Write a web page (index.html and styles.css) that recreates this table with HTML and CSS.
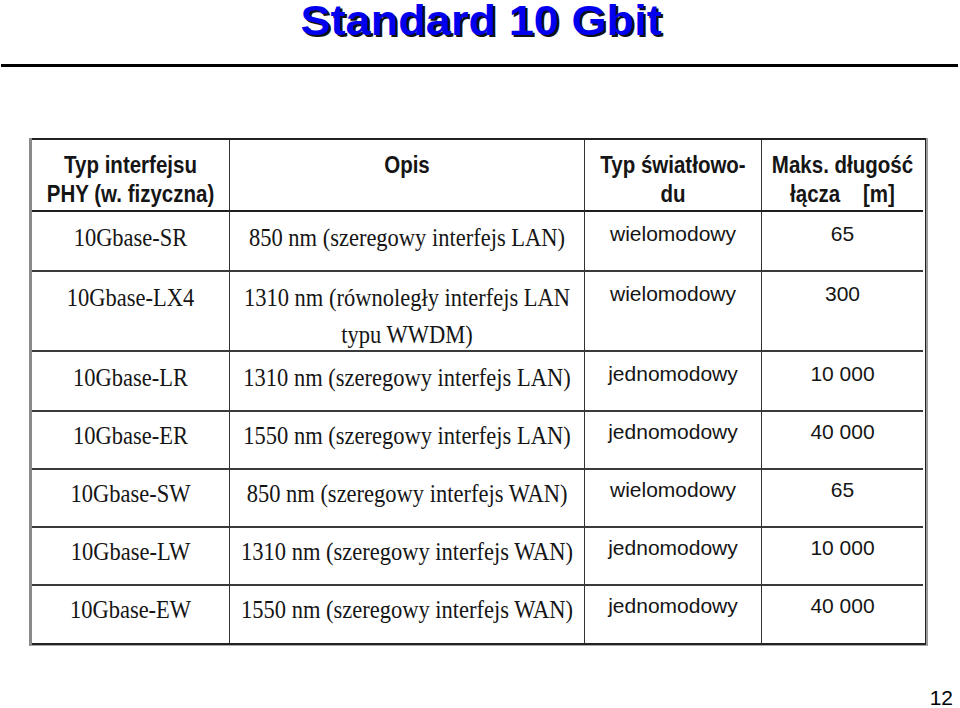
FILE: index.html
```html
<!DOCTYPE html>
<html lang="pl">
<head>
<meta charset="utf-8">
<title>Standard 10 Gbit</title>
<link rel="stylesheet" href="styles.css">
</head>
<body>
<div class="slide">
  <h1 class="title"><span class="title-text">Standard 10 Gbit</span></h1>
  <div class="rule"></div>
  <div class="table-frame">
    <div class="grid">
      <div class="cell head"><span class="tall">Typ interfejsu<br>PHY (w. fizyczna)</span></div>
      <div class="cell head"><span class="tall">Opis</span></div>
      <div class="cell head"><span class="tall">Typ światłowo-<br>du</span></div>
      <div class="cell head last-col"><span class="tall">Maks. długość<br>łącza&nbsp;&nbsp;&nbsp;&nbsp;[m]</span></div>

      <div class="cell serif"><span class="tall">10Gbase-SR</span></div>
      <div class="cell serif"><span class="tall">850 nm (szeregowy interfejs LAN)</span></div>
      <div class="cell sans">wielomodowy</div>
      <div class="cell sans last-col">65</div>

      <div class="cell serif"><span class="tall">10Gbase-LX4</span></div>
      <div class="cell serif"><span class="tall">1310 nm (równoległy interfejs LAN<br>typu WWDM)</span></div>
      <div class="cell sans">wielomodowy</div>
      <div class="cell sans last-col">300</div>

      <div class="cell serif"><span class="tall">10Gbase-LR</span></div>
      <div class="cell serif"><span class="tall">1310 nm (szeregowy interfejs LAN)</span></div>
      <div class="cell sans">jednomodowy</div>
      <div class="cell sans last-col">10 000</div>

      <div class="cell serif tight"><span class="tall">10Gbase-ER</span></div>
      <div class="cell serif tight"><span class="tall">1550 nm (szeregowy interfejs LAN)</span></div>
      <div class="cell sans tight">jednomodowy</div>
      <div class="cell sans tight last-col">40 000</div>

      <div class="cell serif tight"><span class="tall">10Gbase-SW</span></div>
      <div class="cell serif tight"><span class="tall">850 nm (szeregowy interfejs WAN)</span></div>
      <div class="cell sans tight">wielomodowy</div>
      <div class="cell sans tight last-col">65</div>

      <div class="cell serif tight"><span class="tall">10Gbase-LW</span></div>
      <div class="cell serif tight"><span class="tall">1310 nm (szeregowy interfejs WAN)</span></div>
      <div class="cell sans tight">jednomodowy</div>
      <div class="cell sans tight last-col">10 000</div>

      <div class="cell serif tight last-row"><span class="tall">10Gbase-EW</span></div>
      <div class="cell serif tight last-row"><span class="tall">1550 nm (szeregowy interfejs WAN)</span></div>
      <div class="cell sans tight last-row">jednomodowy</div>
      <div class="cell sans tight last-row last-col">40 000</div>
    </div>
  </div>
  <div class="page-number">12</div>
</div>
</body>
</html>
```

FILE: styles.css
```css
html, body {
  margin: 0;
  padding: 0;
  background: #ffffff;
}

.slide {
  width: 960px;
  height: 708px;
  display: flex;
  flex-direction: column;
  overflow: hidden;
  font-family: "Liberation Sans", Arial, sans-serif;
}

.title {
  margin: 0;
  height: 40px;
  font-size: 43px;
  line-height: 40px;
  font-weight: bold;
  text-align: center;
  color: #0000ee;
}

.title-text {
  display: inline-block;
  transform: scaleX(1.05);
  text-shadow: 2px 2px 0 #111;
  padding-left: 2px;
}

.rule {
  margin: 24px 0 0 1px;
  width: 957px;
  height: 3px;
  background: #000000;
}

.table-frame {
  margin: 71px 0 0 29px;
  width: 894px;
  border-left: 3px solid #8a8a8a;
  border-right: 2px solid #9c9c9c;
  border-bottom: 1px solid #a8a8a8;
}

.grid {
  display: grid;
  grid-template-columns: 198px 355px 177px 161px;
  grid-template-rows: 72px 60px 80px 60px 58px 58px 58px 57px;
  border-top: 2px solid #222;
  border-right: 1px solid #222;
  border-bottom: 2px solid #222;
  color: #151515;
}

.cell {
  box-sizing: border-box;
  border-right: 1px solid #333;
  border-bottom: 2px solid #3a3a3a;
  text-align: center;
}

.last-col {
  border-right: none;
}

.last-row {
  border-bottom: none;
}

.tall {
  display: block;
  transform: scaleY(1.15);
  transform-origin: top center;
}

.head {
  font-family: "Liberation Sans", Arial, sans-serif;
  font-weight: bold;
  font-size: 20.5px;
  line-height: 25px;
  padding-top: 10px;
  border-bottom-color: #1e1e1e;
}

.serif {
  font-family: "Liberation Serif", "Times New Roman", serif;
  font-size: 22.5px;
  line-height: 32px;
  padding-top: 8px;
}

.sans {
  font-family: "Liberation Sans", Arial, sans-serif;
  font-size: 21px;
  line-height: 37px;
  padding-top: 3px;
}

.serif.tight {
  padding-top: 6px;
}

.sans.tight {
  padding-top: 1px;
}

.page-number {
  margin-top: auto;
  padding-right: 7px;
  text-align: right;
  font-size: 21px;
  line-height: 21px;
  color: #000;
}
```
